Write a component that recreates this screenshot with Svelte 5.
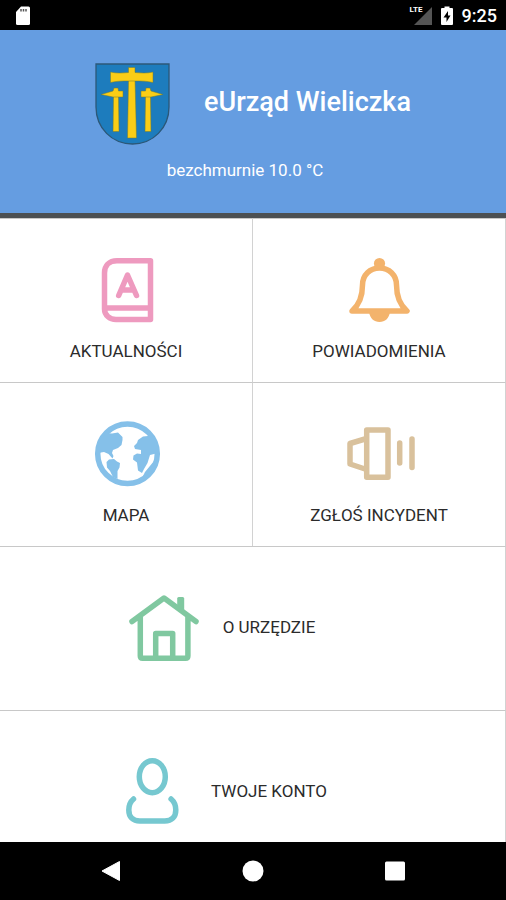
<script>
  const tiles = [
    { id: 'news', label: 'AKTUALNOŚCI', color: '#ee9abf' },
    { id: 'bell', label: 'POWIADOMIENIA', color: '#f3b36c' },
    { id: 'map', label: 'MAPA', color: '#85c0e9' },
    { id: 'horn', label: 'ZGŁOŚ INCYDENT', color: '#d9c19c' },
    { id: 'house', label: 'O URZĘDZIE', color: '#80c8a0', wide: true },
    { id: 'user', label: 'TWOJE KONTO', color: '#76c8d0', wide: true }
  ];
</script>

<div class="screen">
  <div class="status">
    <svg width="16" height="20" viewBox="0 0 16 20" aria-hidden="true">
      <path d="M6 .5h7.500a1.500 1.500 0 0 1 1.500 1.500v15.500a1.500 1.500 0 0 1-1.500 1.500h-11A1.500 1.500 0 0 1 1 17.500V6z" fill="#fff" />
      <path d="M6 3v2.500M8.500 3v2.500M11 3v2.500" stroke="#555" stroke-width="1.500" />
    </svg>
    <div class="right">
      <div class="signal">
        <svg width="22" height="20" viewBox="0 0 22 20" aria-hidden="true">
          <path d="M22 1v18H4z" fill="#555" />
        </svg>
        <span class="lte">LTE</span>
      </div>
      <svg width="12" height="20" viewBox="0 0 12 20" aria-hidden="true">
        <path d="M3.500 2V.5h5V2h2.500a1 1 0 0 1 1 1v15a1 1 0 0 1-1 1H1a1 1 0 0 1-1-1V3a1 1 0 0 1 1-1z" fill="#fff" />
        <path d="M7 5 2.500 11.500H5.500V16L9.500 9.500H7z" fill="#000" />
      </svg>
      <span class="time">9:25</span>
    </div>
  </div>

  <header>
    <div class="brand">
      <svg width="75" height="82" viewBox="0 0 75 82" aria-hidden="true">
        <path d="M1 1h73v43c0 21-16 37-36.500 37S1 65 1 44z" fill="#1d7cbd" stroke="#2c5878" stroke-width="1.300" />
        <g fill="#fbcd16" stroke="#6d7a35" stroke-width=".5">
          <path d="M33.500 16h6.500l1.500 59h-9z" />
          <path d="M15.500 9c6 1.500 12 1 18 .5V4.500h6.500v5c6 .5 12 1 18-.5v10.500c-6-1.500-12-1.500-18-1.500h-6.500c-6 0-12 0-18 1.500z" />
          <path d="M18.500 33h5l.5 35.500h-6z" />
          <path d="M6 31.500 18 28l1-3h4l.5 3h4.500v6H18z" />
          <path d="M50.500 33h5l.5 35.500h-6z" />
          <path d="M68 31.500 56 28l-1-3h-4l-.5 3H46v6h10z" />
        </g>
      </svg>
      <h1>eUrząd Wieliczka</h1>
    </div>
    <p>bezchmurnie 10.0 °C</p>
  </header>

  <main>
    {#each tiles as tile (tile.id)}
      <button type="button" class="tile" class:wide={tile.wide}>
        <svg width="72" height="72" viewBox="0 0 72 72" style:color={tile.color} aria-hidden="true">
          {#if tile.id === 'news'}
            <g class="line">
              <path d="M60.500 6.800H27C19 6.800 14.500 12 14.500 19v36c0 6 5 10.500 11.500 10.500h34.500zM15 54h45" />
              <path d="M28.700 41.500 37.500 21l9 20.500M32 36h11" />
            </g>
          {:else if tile.id === 'bell'}
            <g class="line">
              <path d="M9 57c7-6 10.500-14 10.500-26 0-10 7.500-17 17-17s17 7 17 17c0 12 3.500 20 10.500 26z" />
            </g>
            <circle cx="36.500" cy="9.500" r="5.600" fill="currentColor" />
            <path d="M26 58h21c-1 6.500-5 10-10.500 10S27 64.500 26 58z" fill="currentColor" />
          {:else if tile.id === 'map'}
            <circle cx="37.500" cy="35.700" r="29.800" class="line" />
            <path
              fill="currentColor"
              d="M8 24 16 15l6 .5 6-1 4.500 4.500v3L31.500 27 28 30l-5 2-1 3 1.500 3-1 2.500-4-4.500-4.500-2-6 1z"
            />
            <path
              fill="currentColor"
              d="M16.500 44 19 41.500l5-.5 3 2.500 3 1.500-.5 4.500-2 3.500v8L23 59l-3-6-3-3.500z"
            />
            <path
              fill="currentColor"
              d="M44 28l3-3 1-3 5-3.500 10-1 5 11-2 7-6 1.500-2.500 8L54 51l-2 4-4-2.500-1-8-4-3 .5-4 3.500-2 4 .5v-4l-6-1z"
            />
            <path fill="currentColor" d="M64 43 55 54l-2 4 2 1 4-5 5-2z" />
          {:else if tile.id === 'horn'}
            <g class="line">
              <rect x="23.700" y="12" width="21.300" height="47.200" />
              <path d="M22 21 7 25.500v20.500l15 5M56.700 25v20M69 21v28.500" />
            </g>
          {:else if tile.id === 'house'}
            <g class="line">
              <path d="M4 29.500 36 6l32 23.500M12.300 25v39q0 2.300 2.300 2.300h43q2.300 0 2.300-2.300V25M27.700 65V41.500h17V65" />
              <path d="M49.200 16V6.500q0-1.500 1.500-1.500h4q1.500 0 1.500 1.500V21z" fill="currentColor" stroke="none" />
            </g>
          {:else}
            <g class="line">
              <ellipse cx="36.300" cy="20.700" rx="13" ry="16" />
              <path d="M17.500 43c-3.500 3-4.700 7-4.700 11 0 7 4 11 11 11h25c7 0 11-4 11-11 0-4-1.200-8-4.700-11" />
            </g>
          {/if}
        </svg>
        <span>{tile.label}</span>
      </button>
    {/each}
  </main>

  <nav>
    <button type="button" aria-label="Wstecz">
      <svg width="24" height="24" viewBox="0 0 24 24"><path d="M20.500 2.500v19L3 12z" fill="#fff" stroke="#fff" stroke-linejoin="round" /></svg>
    </button>
    <button type="button" aria-label="Ekran główny">
      <svg width="24" height="24" viewBox="0 0 24 24"><circle cx="12" cy="12" r="10.500" fill="#fff" /></svg>
    </button>
    <button type="button" aria-label="Ostatnie">
      <svg width="24" height="24" viewBox="0 0 24 24"><rect x="2" y="2.500" width="20" height="19" rx="1.500" fill="#fff" /></svg>
    </button>
  </nav>
</div>

<style>
  .screen {
    display: flex;
    flex-direction: column;
    height: 100vh;
    overflow: hidden;
    background: #fff;
    font-family: Roboto, 'Liberation Sans', sans-serif;
  }

  svg {
    display: block;
    flex: none;
  }

  button {
    margin: 0;
    border: 0;
    padding: 0;
    background: none;
    font: inherit;
  }

  .status {
    flex: none;
    display: flex;
    align-items: center;
    justify-content: space-between;
    box-sizing: border-box;
    height: 30px;
    padding: 2px 9px 0 15px;
    background: #000;
    color: #fff;
  }

  .right {
    display: flex;
    align-items: center;
    gap: 9px;
  }

  .signal {
    position: relative;
  }

  .lte {
    position: absolute;
    top: 0;
    left: 0;
    font-size: 8px;
    line-height: 8px;
    font-weight: 700;
  }

  .time {
    font-size: 18px;
    line-height: 20px;
    font-weight: 500;
  }

  header {
    flex: none;
    box-sizing: border-box;
    height: 188px;
    padding-top: 33px;
    border-bottom: 5px solid #4c5053;
    background: #659de1;
    color: #fff;
  }

  .brand {
    display: flex;
    align-items: center;
    justify-content: center;
    gap: 34px;
  }

  h1 {
    margin: 0;
    padding-bottom: 4px;
    font-size: 27px;
    line-height: 32px;
    font-weight: 500;
  }

  p {
    margin: 15px 16px 0 0;
    font-size: 17px;
    line-height: 20px;
    text-align: center;
  }

  main {
    flex: 1;
    min-height: 0;
    overflow: hidden;
    display: grid;
    grid-template-columns: 1fr 1fr;
    grid-auto-rows: 164px;
  }

  .tile {
    display: flex;
    flex-direction: column;
    align-items: center;
    justify-content: flex-start;
    gap: 15px;
    padding-top: 35px;
    border-top: 1px solid #c8c8c8;
    border-right: 1px solid #d2d2d2;
    color: #2b2b2b;
    font-size: 17px;
    line-height: 20px;
  }

  .wide {
    grid-column: 1 / -1;
    flex-direction: row;
    justify-content: center;
    gap: 23px;
    padding: 0 62px 2px 0;
  }

  .wide span {
    padding-bottom: 2px;
  }

  .line {
    fill: none;
    stroke: currentColor;
    stroke-width: 5.500px;
    stroke-linecap: round;
    stroke-linejoin: round;
  }

  nav {
    flex: none;
    display: flex;
    align-items: center;
    justify-content: center;
    gap: 94px;
    height: 58px;
    background: #000;
  }

  nav button {
    display: flex;
    align-items: center;
    justify-content: center;
    width: 48px;
    height: 48px;
  }
</style>
